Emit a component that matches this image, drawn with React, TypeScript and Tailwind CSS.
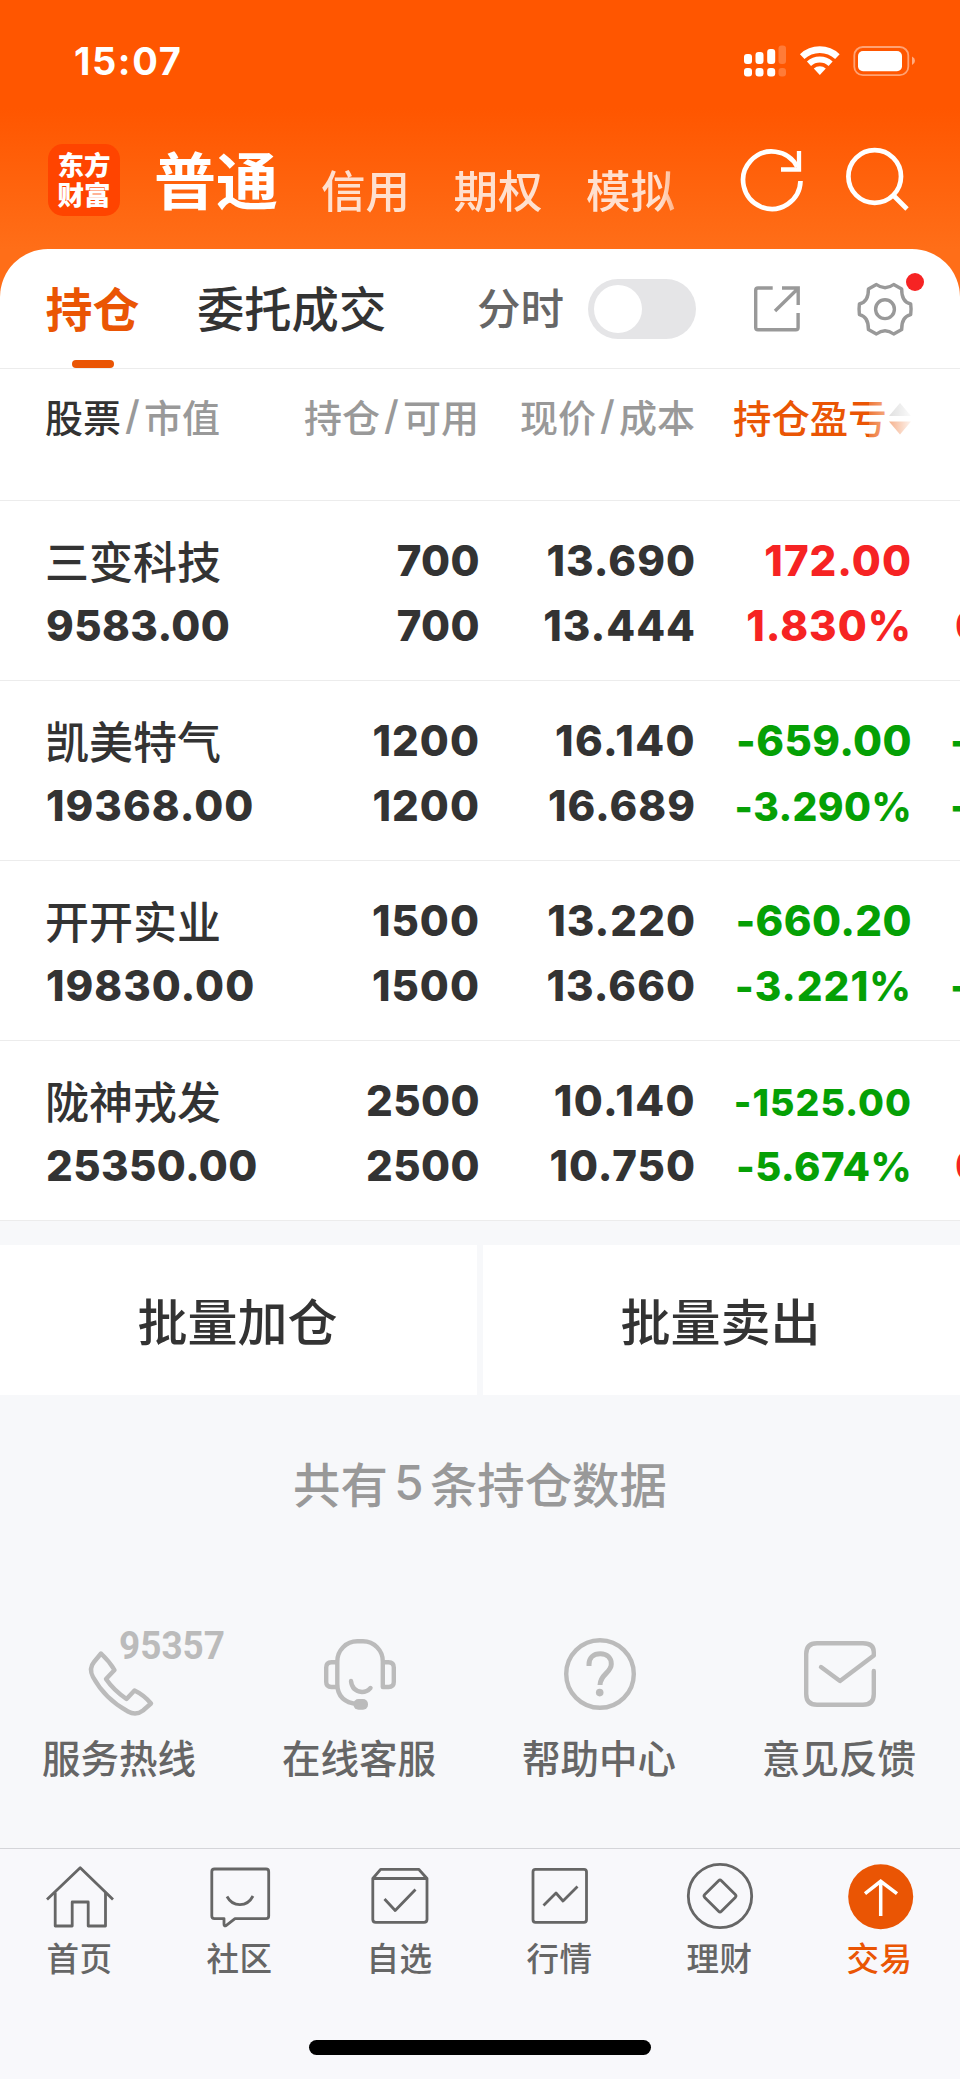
import type { ReactNode } from "react";

const CJK = "font-['Noto_Sans_CJK_SC',sans-serif]";

type Tone = "up" | "down";

interface Holding {
  name: string;
  value: string;
  amount: string;
  price: string;
  cost: string;
  profit: string;
  rate: string;
  tone: Tone;
  profitSize?: string;
  rateSize?: string;
  next: [string, string];
  nextTone: Tone;
}

const holdings: Holding[] = [
  { name: "三变科技", value: "9583.00", amount: "700", price: "13.690", cost: "13.444", profit: "172.00", rate: "1.830%", tone: "up", next: ["", "0"], nextTone: "up" },
  { name: "凯美特气", value: "19368.00", amount: "1200", price: "16.140", cost: "16.689", profit: "-659.00", rate: "-3.290%", tone: "down", rateSize: "text-[39px]", next: ["-", "-"], nextTone: "down" },
  { name: "开开实业", value: "19830.00", amount: "1500", price: "13.220", cost: "13.660", profit: "-660.20", rate: "-3.221%", tone: "down", rateSize: "text-[40.5px]", next: ["", "-"], nextTone: "down" },
  { name: "陇神戎发", value: "25350.00", amount: "2500", price: "10.140", cost: "10.750", profit: "-1525.00", rate: "-5.674%", tone: "down", profitSize: "text-[37.5px]", rateSize: "text-[40px]", next: ["", "0"], nextTone: "up" },
];

const toneClass: Record<Tone, string> = { up: "text-[#f62323]", down: "text-[#05a005]" };

function StatusBar() {
  return (
    <div className="flex h-[120px] items-start justify-between pl-[74px] pr-[44px] pt-[40px]">
      <span className="text-[38px] leading-[42px] font-bold tracking-[1.6px] text-white">15:07</span>
      <svg className="h-[42px] w-[174px]" viewBox="742 40 174 42" fill="white">
        <rect x="744" y="54" width="8" height="10" rx="3" />
        <rect x="755.5" y="52" width="8" height="12" rx="3" />
        <rect x="767.2" y="49" width="8" height="15" rx="3" />
        <rect x="778.5" y="45.5" width="7.5" height="18.5" rx="3" opacity=".22" />
        <rect x="744" y="68" width="8" height="8.5" rx="3" />
        <rect x="755.5" y="68" width="8" height="8.5" rx="3" />
        <rect x="767.2" y="68" width="8" height="8.5" rx="3" />
        <rect x="778.5" y="68" width="7.5" height="8.5" rx="3" opacity=".22" />
        <path d="M802.2 56.6a25.7 25.7 0 0 1 35.2 0" fill="none" stroke="white" strokeWidth="6.6" />
        <path d="M809 63.8a15.8 15.8 0 0 1 21.6 0" fill="none" stroke="white" strokeWidth="6" />
        <path d="M819.8 75l-6-6.4a9 9 0 0 1 12 0z" />
        <rect x="854.3" y="47" width="54" height="28.2" rx="8.5" fill="none" stroke="white" strokeOpacity=".45" strokeWidth="1.8" />
        <rect x="858" y="51" width="44" height="20.3" rx="5" />
        <path d="M912 56.5q3 1.6 3 4.3t-3 4.3z" opacity=".5" />
      </svg>
    </div>
  );
}

function AccountNav() {
  return (
    <div className={`flex h-[129px] items-start pl-[48px] pr-[46px] whitespace-nowrap text-white ${CJK}`}>
      <div className="mt-[24px] w-[72px] shrink-0 rounded-[15px] bg-[#ff4400] pt-[5px] pb-[7px] text-center text-[26.5px] leading-[30px] font-black">
        东方
        <br />
        财富
      </div>
      <div className="flex w-[582px] items-start pl-[34px] [mask-image:linear-gradient(to_right,black_540px,transparent_580px)]">
        <span className="mt-[23px] text-[62px] leading-[70px] font-bold">普通</span>
        <div className="ml-[43px] mt-[44px] flex gap-[43.5px] text-[44.5px] leading-[50px] font-medium text-white/80">
          <span>信用</span>
          <span>期权</span>
          <span>模拟</span>
        </div>
      </div>
      <svg className="ml-auto mt-[24px] h-[72px] w-[176px] shrink-0" viewBox="738 144 176 72" fill="none" stroke="white" strokeWidth="4.7">
        <path d="M800.5 181a28.7 28.7 0 1 1 -3.2 -14" />
        <path d="M799 151v18.5h-18" strokeWidth="4.3" />
        <circle cx="874.7" cy="176.5" r="26.3" />
        <path d="M893 195l14 14" />
      </svg>
    </div>
  );
}

function SectionTabs() {
  return (
    <div className={`flex h-[120px] items-start border-b border-[#ececec] pl-[45px] pr-[36px] ${CJK}`}>
      <div className="flex w-[95px] flex-col items-center text-[#ea5504]">
        <span className="mt-[28px] h-[60px] text-[47px] leading-[60px] font-bold whitespace-nowrap">持仓</span>
        <span className="mt-[23px] h-[8px] w-[42px] rounded-[4px] bg-[#ea5504]" />
      </div>
      <span className="ml-[57px] mt-[28px] w-[192px] text-[47.3px] leading-[60px] font-medium whitespace-nowrap text-[#333]">委托成交</span>
      <span className="ml-[88px] mt-[28px] w-[88px] text-[43.5px] leading-[60px] font-medium whitespace-nowrap text-[#666]">分时</span>
      <span className="ml-[23px] mt-[30px] flex h-[60px] w-[108px] items-center rounded-full bg-[#e5e5e7] pl-[6px]">
        <span className="h-[48px] w-[48px] rounded-full bg-white" />
      </span>
      <svg className="ml-auto mt-[21px] h-[70px] w-[174px]" viewBox="750 270 174 70" fill="none" stroke="#999" strokeWidth="3.4" strokeLinejoin="round">
        <path d="M772.7 288H758q-2.3 0-2.3 2.3V327.5q0 2.3 2.3 2.3H795.8q2.3 0 2.3-2.3V313" />
        <path d="M782 288H798.2V305M775 311L797.5 289" strokeLinejoin="miter" />
        <path d="M893.7 284.5L901.7 289C901.5 297 904.5 302.5 910.7 304Q911.5 309.3 910.7 314.6C904.5 316 901.5 321.5 901.7 329.5L893.7 334Q885 327.5 876.4 334L868.4 329.5C868.6 321.5 865.5 316 859.4 314.6Q858.7 309.3 859.4 304C865.5 302.5 868.6 297 868.4 289L876.4 284.5Q885 291 893.7 284.5Z" />
        <circle cx="885" cy="309.2" r="9.4" />
        <circle cx="915" cy="282" r="9" fill="#f62323" stroke="none" />
      </svg>
    </div>
  );
}

function ColumnTitle({ first, second, strong = false }: { first: string; second: string; strong?: boolean }) {
  return (
    <span className={strong ? "-ml-px flex h-[48px] items-center" : "flex h-[48px] items-center justify-end"}>
      <span className={strong ? "text-[#333]" : ""}>{first}</span>
      <span className="flex w-[23px] justify-center font-['Inter',sans-serif] text-[40px]">/</span>
      <span>{second}</span>
    </span>
  );
}

const GRID = "grid grid-cols-[210px_223px_216px_216px_95px] pl-[46px]";

function TableHeader() {
  return (
    <div className={`${GRID} ${CJK} h-[132px] border-b border-[#ececec] pt-[23px] text-[38px] leading-[48px] font-medium whitespace-nowrap text-[#999]`}>
      <ColumnTitle first="股票" second="市值" strong />
      <ColumnTitle first="持仓" second="可用" />
      <ColumnTitle first="现价" second="成本" />
      <span className="relative flex h-[48px] items-center pl-[38px] text-[38.4px] text-[#ea5504]">
        持仓盈亏
        <svg className="ml-[2px] mt-[5px] h-[32px] w-[22px] shrink-0" viewBox="0 0 22 32">
          <path d="M11 0L22 13H0z" fill="#bbb" />
          <path d="M0 18.5H22L11 31.5z" fill="#ea5504" />
        </svg>
        <span className="absolute top-0 -right-[4px] h-[48px] w-[46px] bg-linear-to-r from-white/20 to-white" />
      </span>
    </div>
  );
}

const digitTracking = ["tracking-[0.4px]", "tracking-[1px]", "tracking-[1.4px]"];

/** The digit 1 is narrow in this face, so figures that hold it are set a little looser. */
function Figure({ children, size = "" }: { children: string; size?: string }) {
  const ones = Math.min(children.split("1").length - 1, 2);
  return (
    <div className="h-[65px]">
      <span className={`${digitTracking[ones]} ${size}`}>{children}</span>
    </div>
  );
}

function HoldingRow({ item }: { item: Holding }) {
  return (
    <div className={`${GRID} h-[180px] overflow-hidden border-b border-[#ececec] pt-[27px] text-[42px] leading-[65px] font-extrabold whitespace-nowrap text-[#333]`}>
      <div>
        <div className={`-ml-px h-[65px] text-[44px] font-medium ${CJK}`}>{item.name}</div>
        <Figure>{item.value}</Figure>
      </div>
      <div className="-mr-px text-right">
        <Figure>{item.amount}</Figure>
        <Figure>{item.amount}</Figure>
      </div>
      <div className="-mr-px text-right">
        <Figure>{item.price}</Figure>
        <Figure>{item.cost}</Figure>
      </div>
      <div className={`-mr-px text-right ${toneClass[item.tone]}`}>
        <Figure size={item.profitSize}>{item.profit}</Figure>
        <Figure size={item.rateSize}>{item.rate}</Figure>
      </div>
      <div className={`${item.nextTone === "up" ? "pl-[44px]" : "pl-[39px]"} ${toneClass[item.nextTone]}`}>
        <Figure>{item.next[0]}</Figure>
        <Figure>{item.next[1]}</Figure>
      </div>
    </div>
  );
}

function BatchActions() {
  return (
    <div className={`mt-[24px] grid h-[150px] grid-cols-2 gap-[6px] text-[50px] font-medium text-[#333] ${CJK}`}>
      {["批量加仓", "批量卖出"].map((label) => (
        <button key={label} className="flex items-center justify-center bg-white pb-[2px] pr-[2px] leading-[60px]">{label}</button>
      ))}
    </div>
  );
}

function Service({ label, children }: { label: string; children: ReactNode }) {
  return (
    <div className="flex flex-col items-center">
      {children}
      <span className="mt-[9px] pr-[2px] text-[38.5px] leading-[50px] font-medium text-[#666]">{label}</span>
    </div>
  );
}

const serviceIcon = "h-[100px] w-[240px]";

function Services() {
  const stroke = { fill: "none", stroke: "#bbb", strokeWidth: 4.4, strokeLinecap: "round", strokeLinejoin: "round" } as const;
  return (
    <div className={`grid h-[226px] grid-cols-4 ${CJK}`}>
      <Service label="服务热线">
        <svg className={serviceIcon} viewBox="0 1622 240 100" {...stroke}>
          <path d="M101 1653.5Q109.500 1661.5 114.5 1670L106 1679Q113.5 1690 126.5 1699L134.5 1690.5Q144 1695 151 1703.5L143 1710.5Q136 1716 128 1711.5Q105 1699 93 1677Q88.5 1668.5 94 1662Z" />
          <text x="119" y="1659" textLength="106" lengthAdjust="spacingAndGlyphs" fill="#bbb" stroke="none" className="font-['Roboto',sans-serif] text-[38px] font-bold">95357</text>
        </svg>
      </Service>
      <Service label="在线客服">
        <svg className={serviceIcon} viewBox="240 1622 240 100" {...stroke}>
          <path d="M358 1704.3Q337.3 1702 337.3 1684V1661.5A20 20 0 0 1 357.3 1641.3H363A20 20 0 0 1 382.8 1661.5V1687H388.5Q393.8 1687 393.8 1682V1667.5Q393.8 1662.2 388.5 1662.2H383M337 1662.2H331.5Q326.2 1662.2 326.2 1667.5V1682Q326.2 1687 331.5 1687H337" />
          <path d="M351 1681Q352 1691 362 1692Q367 1692 370.5 1688" />
          <rect x="353.5" y="1699" width="14.5" height="10.8" rx="5" fill="#bbb" stroke="none" />
        </svg>
      </Service>
      <Service label="帮助中心">
        <svg className={serviceIcon} viewBox="480 1622 240 100" {...stroke}>
          <circle cx="600" cy="1674" r="33.8" />
          <path d="M589 1666V1664.5C589 1657.5 593.5 1653.8 600.3 1653.8S611.3 1658 611.3 1664C611.3 1673 600.2 1674 600 1685" strokeWidth="5" strokeLinecap="butt" />
          <circle cx="599.7" cy="1692.6" r="3.8" fill="#bbb" stroke="none" />
        </svg>
      </Service>
      <Service label="意见反馈">
        <svg className={serviceIcon} viewBox="720 1622 240 100" {...stroke}>
          <path d="M873.8 1671V1694Q873.8 1704.8 863 1704.8H817Q806.2 1704.8 806.2 1694V1654Q806.2 1643.2 817 1643.2H863Q873.8 1643.2 873.8 1652V1655.5L840 1681L821 1667" />
        </svg>
      </Service>
    </div>
  );
}

function Tab({ label, active = false, children }: { label: string; active?: boolean; children: ReactNode }) {
  return (
    <div className={active ? "flex flex-col items-center text-[#ea5504]" : "flex flex-col items-center text-[#666]"}>
      {children}
      <span className="pr-px text-[32.5px] leading-[40px] font-medium tracking-[0.5px]">{label}</span>
    </div>
  );
}

const tabIcon = "h-[80px] w-[160px]";

function TabBar() {
  const line = { fill: "none", stroke: "currentColor", strokeWidth: 2.8, strokeLinejoin: "round" } as const;
  return (
    <nav className={`flex h-[231px] flex-col items-center border-t border-[#d4d5d9] bg-[#f8f8fb] ${CJK}`}>
      <div className="grid h-[191px] w-full grid-cols-6 pt-[8px]">
        <Tab label="首页">
          <svg className={tabIcon} viewBox="0 1857 160 80" {...line}>
            <path d="M47 1899.5L80.2 1867.8L113 1899.5" />
            <path d="M55.2 1892.5V1926H72.2V1902H88.2V1926H105.5V1892.5" />
          </svg>
        </Tab>
        <Tab label="社区">
          <svg className={tabIcon} viewBox="160 1857 160 80" {...line}>
            <path d="M214.5 1869H266Q268.7 1869 268.7 1871.7V1916Q268.7 1918.6 266 1918.6H235L226 1925.7Q224 1926.5 224 1924V1918.6H214.5Q211.8 1918.6 211.8 1916V1871.7Q211.8 1869 214.5 1869Z" />
            <path d="M227 1896.5C233 1907.5 247 1907.5 253 1896" />
          </svg>
        </Tab>
        <Tab label="自选">
          <svg className={tabIcon} viewBox="320 1857 160 80" {...line}>
            <path d="M372.8 1878.5L380.6 1869.3H418.7L427 1878.5V1919.5Q427 1922.3 424 1922.3H375.8Q372.8 1922.3 372.8 1919.5ZM372.8 1878.5H427" />
            <path d="M384.5 1899L395.2 1910.5L415.5 1889.5" />
          </svg>
        </Tab>
        <Tab label="行情">
          <svg className={tabIcon} viewBox="480 1857 160 80" {...line}>
            <rect x="533" y="1869.3" width="53.5" height="53" rx="2.5" />
            <path d="M543.5 1905.5L556 1893L563 1901L577.5 1886.5" />
          </svg>
        </Tab>
        <Tab label="理财">
          <svg className={tabIcon} viewBox="640 1857 160 80" {...line}>
            <circle cx="720" cy="1896" r="31.7" />
            <rect x="708.2" y="1884.2" width="23.6" height="23.6" rx="2" transform="rotate(45 720 1896)" />
          </svg>
        </Tab>
        <Tab label="交易" active>
          <svg className={tabIcon} viewBox="800 1857 160 80" fill="none" stroke="white" strokeWidth="3.5">
            <circle cx="880.7" cy="1896.7" r="32.5" fill="#ea5504" stroke="none" />
            <path d="M880.7 1916V1881M865 1893.7L880.7 1881.3L897 1893.7" />
          </svg>
        </Tab>
      </div>
      <span className="h-[15px] w-[342px] rounded-full bg-black" />
    </nav>
  );
}

export default function App() {
  return (
    <div className="h-[2079px] w-[960px] overflow-hidden bg-[#f7f8fa] font-['Inter',sans-serif]">
      <div className="h-[310px] bg-[linear-gradient(to_bottom,#ff5600_0px,#ff5600_108px,#ff6e18_249px,#ff6e18_310px)]">
        <StatusBar />
        <AccountNav />
      </div>
      <main className="relative -mt-[61px] rounded-t-[48px] bg-white">
        <SectionTabs />
        <TableHeader />
        {holdings.map((item) => (
          <HoldingRow key={item.name} item={item} />
        ))}
      </main>
      <BatchActions />
      <p className={`flex h-[227px] items-start justify-center pt-[58px] text-[47.4px] leading-[60px] font-medium text-[#999] ${CJK}`}>
        <span>共有</span>
        <span className="w-[42px] text-center font-['Inter',sans-serif]">5</span>
        <span>条持仓数据</span>
      </p>
      <Services />
      <TabBar />
    </div>
  );
}
